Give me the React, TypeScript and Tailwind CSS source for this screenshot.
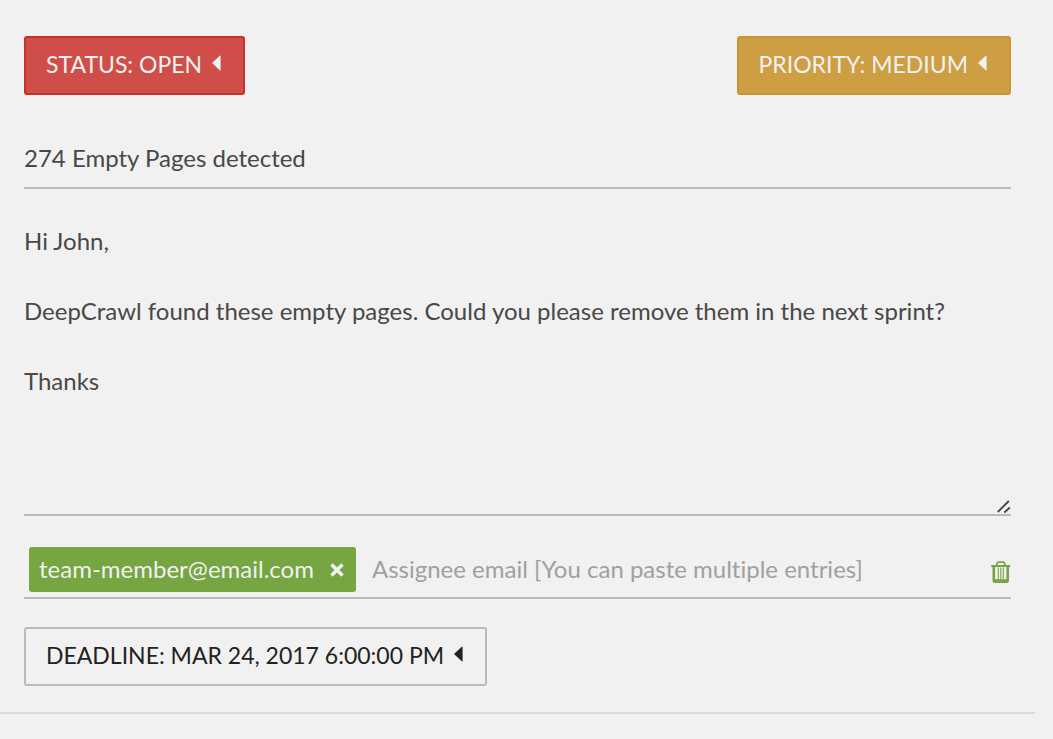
import { useState } from 'react'
import { clsx } from 'clsx'

const DEFAULT_MESSAGE = `Hi John,

DeepCrawl found these empty pages. Could you please remove them in the next sprint?

Thanks`

const BUTTON_VARIANTS = {
  danger: 'border-[#c9302c] bg-[#d04e49] text-[#f1f1f1]',
  warning: 'border-[#c99433] bg-[#cd9f42] text-[#f1f1f1]',
  outline: 'border-[#bbbbbb] bg-transparent text-[#222222]',
}

function CaretLeft() {
  return (
    <svg viewBox="0 0 9 16" className="mb-1 h-4 w-[9px] fill-current" aria-hidden>
      <path d="M8.6 1.1v13.8c0 .5-.5.7-.8.4L.5 8.6a.8.8 0 0 1 0-1.2L7.8.7c.3-.3.8-.1.8.4Z" />
    </svg>
  )
}

function TrashIcon() {
  return (
    <svg viewBox="0 0 20 22" className="h-[22px] w-5" fill="none" stroke="currentColor" aria-hidden>
      <path d="M5.8 4.5V3.2a2 2 0 0 1 2-2h3.9a2 2 0 0 1 2 2v1.3" strokeWidth="1.8" />
      <path d="M.2 5h19" strokeWidth="2" />
      <path d="M2.8 5v14.2c0 .9.6 1.5 1.500 1.500h10.900c.9 0 1.500-.6 1.500-1.500V5" strokeWidth="2.600" />
      <path d="M3 19.600h13.500" strokeWidth="2.800" />
      <path d="M7.300 6.500v12M9.800 6.500v12M12.300 6.500v12" strokeWidth="1.100" />
    </svg>
  )
}

function DropdownButton({
  label,
  variant,
}: {
  label: string
  variant: keyof typeof BUTTON_VARIANTS
}) {
  return (
    <button
      type="button"
      aria-haspopup="true"
      className={clsx(
        'flex h-[59px] items-center gap-2.5 rounded-[3px] border-2 pr-[22px] pb-0.5 pl-5 text-[23px] uppercase',
        BUTTON_VARIANTS[variant],
      )}
    >
      {label}
      <CaretLeft />
    </button>
  )
}

export default function App() {
  const [title, setTitle] = useState('274 Empty Pages detected')
  const [message, setMessage] = useState(DEFAULT_MESSAGE)
  const [assignees, setAssignees] = useState(['team-member@email.com'])
  const [draft, setDraft] = useState('')

  return (
    <main className="min-h-screen bg-[#f1f1f1] pr-[18px] font-['Lato','Open_Sans',sans-serif] text-2xl text-[#484848] [font-variant-ligatures:no-common-ligatures]">
      <form className="border-b-2 border-[#dadada] px-6 pt-9 pb-[26px]">
        <div className="flex justify-between">
          <DropdownButton label="Status: Open" variant="danger" />
          <DropdownButton label="Priority: Medium" variant="warning" />
        </div>

        <input
          aria-label="Title"
          value={title}
          onChange={(e) => setTitle(e.target.value)}
          className="mt-8 block h-[62px] w-full border-b-2 border-[#b9b9b9] bg-transparent outline-none"
        />

        <div className="relative mt-[34px]">
          <textarea
            aria-label="Message"
            value={message}
            onChange={(e) => setMessage(e.target.value)}
            className="block h-[293px] w-full resize-none border-b-2 border-[#b9b9b9] bg-transparent leading-[35px] outline-none"
          />
          <svg
            viewBox="0 0 14 14"
            className="pointer-events-none absolute right-0 bottom-0.5 size-3.5 stroke-[#444444]"
            aria-hidden
          >
            <path d="M.8 12 11.8 1M7.3 12.5l5.5-5" strokeWidth="1.8" />
          </svg>
        </div>

        <div className="mt-[31px] flex items-center gap-4 border-b-2 border-[#b9b9b9] pb-[5px] pl-[5px]">
          {assignees.map((email) => (
            <span
              key={email}
              className="flex h-[45px] items-center gap-4 rounded-[3px] bg-[#76a541] pr-3 pl-2.5 text-[#f1f1f1]"
            >
              <span className="pb-0.5">{email}</span>
              <button
                type="button"
                aria-label={`Remove ${email}`}
                onClick={() => setAssignees(assignees.filter((a) => a !== email))}
              >
                <svg viewBox="0 0 14 14" className="size-3.5 stroke-current" aria-hidden>
                  <path d="m1.5 1.5 11 11m0-11-11 11" strokeWidth="3.6" />
                </svg>
              </button>
            </span>
          ))}
          <input
            type="text"
            aria-label="Assignee email"
            placeholder="Assignee email [You can paste multiple entries]"
            value={draft}
            onChange={(e) => setDraft(e.target.value)}
            className="min-w-0 flex-1 bg-transparent pb-0.5 outline-none placeholder:text-[#a0a0a0]"
          />
          <button
            type="button"
            aria-label="Remove all assignees"
            onClick={() => setAssignees([])}
            className="pt-1 text-[#76a541]"
          >
            <TrashIcon />
          </button>
        </div>

        <div className="mt-7 flex">
          <DropdownButton label="Deadline: Mar 24, 2017 6:00:00 PM" variant="outline" />
        </div>
      </form>
    </main>
  )
}
